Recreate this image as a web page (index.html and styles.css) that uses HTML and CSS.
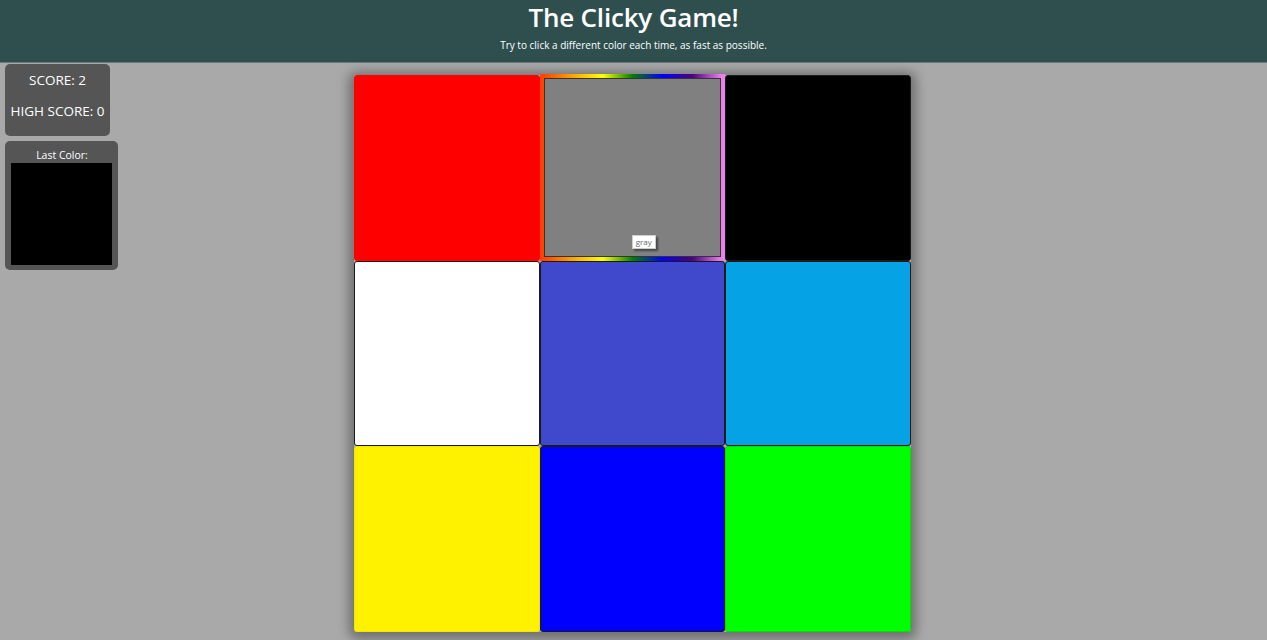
FILE: index.html
```html
<!DOCTYPE html>
<html>
<head>
<meta charset="utf-8">
<link rel="stylesheet" href="styles.css">
</head>
<body>
<header class="header">
  <h1 class="title">The Clicky Game!</h1>
  <p class="subtitle">Try to click a different color each time, as fast as possible.</p>
</header>
<main class="main">
  <aside class="side">
    <div class="scorebox">
      <div class="score">SCORE: 2</div>
      <div class="score">HIGH SCORE: 0</div>
    </div>
    <div class="lastbox">
      <div class="lastlabel">Last Color:</div>
      <div class="lastswatch"></div>
    </div>
  </aside>
  <section class="board">
    <div class="cell red"></div>
    <div class="cell active"><div class="inner"></div><span class="tip">gray</span></div>
    <div class="cell black"></div>
    <div class="cell white"></div>
    <div class="cell slate"></div>
    <div class="cell sky"></div>
    <div class="cell yellow"></div>
    <div class="cell blue"></div>
    <div class="cell green"></div>
  </section>
</main>
</body>
</html>
```
FILE: styles.css
```css
* { box-sizing: border-box; }
html, body { margin: 0; padding: 0; }
body {
  background: #a9a9a9;
  font-family: "Open Sans", "Noto Sans", sans-serif;
  height: 640px;
  overflow: hidden;
}
.header {
  background: #2f4f4f;
  height: 63px;
  border-bottom: 1px solid #6a7a7a;
  text-align: center;
  color: #fff;
  padding-top: 1px;
}
.title {
  margin: 0;
  font-size: 26px;
  font-weight: 600;
  line-height: 32px;
  letter-spacing: -0.2px;
}
.subtitle {
  margin: 5px 0 0;
  font-size: 10px;
  line-height: 14px;
}
.main {
  position: relative;
  display: flex;
  justify-content: center;
  padding-top: 12px;
}
.side {
  position: absolute;
  left: 5px;
  top: 1px;
  display: flex;
  flex-direction: column;
  align-items: flex-start;
  gap: 5px;
}
.scorebox {
  background: #555;
  border-radius: 5px;
  width: 105px;
  height: 72px;
  color: #fff;
  font-size: 13.5px;
  text-align: center;
  display: flex;
  flex-direction: column;
  justify-content: center;
  gap: 11px;
  line-height: 20px;
  padding-bottom: 9px;
}
.lastbox {
  background: #555;
  border-radius: 5px;
  width: 113px;
  height: 129px;
  padding: 7px 5px 0 6px;
  color: #fff;
}
.lastlabel {
  font-size: 10.5px;
  text-align: center;
  line-height: 15px;
}
.lastswatch {
  background: #000;
  width: 101px;
  height: 102px;
}
.board {
  display: grid;
  grid-template-columns: repeat(3, 1fr);
  grid-template-rows: repeat(3, 1fr);
  width: 557px;
  height: 557px;
  box-shadow: 0 2px 12px 5px rgba(0,0,0,0.35);
  border-radius: 3px;
  margin-left: -2px;
}
.cell {
  border: 1px solid #1a1a1a;
  border-radius: 3px;
  position: relative;
}
.red { background: #ff0000; border-color: #ff0000; }
.black { background: #000; }
.white { background: #fff; }
.slate { background: #4049cc; }
.sky { background: #05a2e6; }
.yellow { background: #fff200; border-color: #f2e600; }
.blue { background: #0000ff; }
.green { background: #00ff00; border-color: #00e000; }
.active {
  border: 4px solid transparent;
  border-image: linear-gradient(to right, #ff4000, orange, yellow, green, blue, indigo, violet) 1;
  border-radius: 0;
  background: #808080;
  margin-top: -1px;
}
.inner {
  position: absolute;
  inset: 0;
  border: 1px solid #333;
}
.tip {
  position: absolute;
  left: 88px;
  top: 157px;
  background: #fff;
  border: 1px solid #ccc;
  box-shadow: 2px 2px 2px rgba(0,0,0,0.45);
  font-size: 8px;
  color: #666;
  padding: 1px 3px;
  line-height: 10px;
}
```
